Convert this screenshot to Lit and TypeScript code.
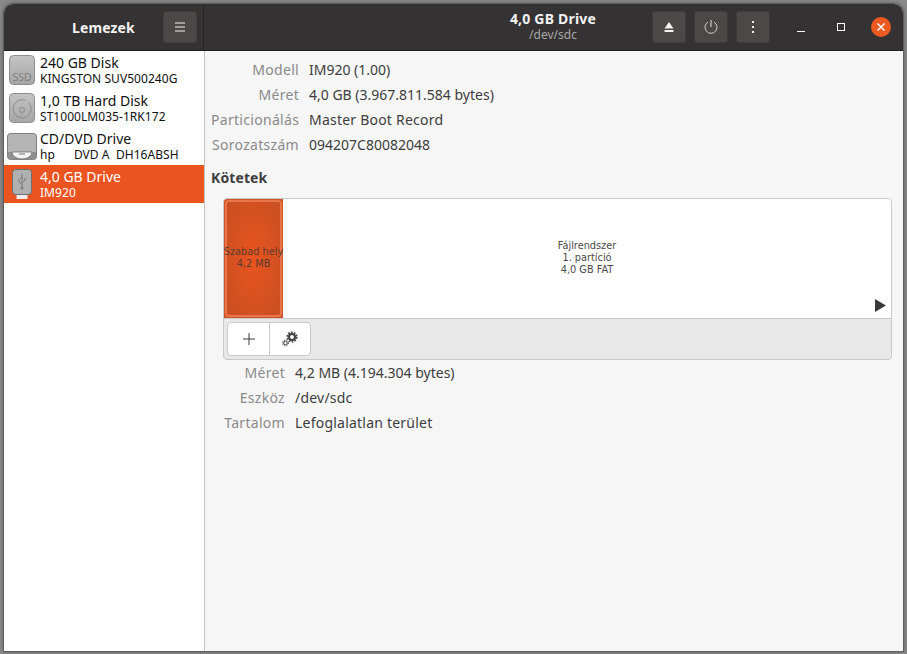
import { LitElement, html, css, svg } from "lit";
import { customElement } from "lit/decorators.js";

const driveBody = svg`<defs><linearGradient id="g" x1="0" y1="0" x2="0" y2="1"><stop offset="0" stop-color="#c4c4c4"/><stop offset="1" stop-color="#a6a6a6"/></linearGradient></defs>`;

@customElement("app-root")
export class AppRoot extends LitElement {
  static styles = css`
    :host {
      display: block;
      width: 907px;
      height: 654px;
      overflow: hidden;
      font-family: "Noto Sans", "Open Sans", sans-serif;
      font-size: 14px;
      color: #3d3d3d;
      background: #8a8a8a;
      padding: 4px 4px 3px 4px;
      box-sizing: border-box;
    }
    .win {
      height: 100%;
      display: flex;
      flex-direction: column;
      border-radius: 9px 9px 0 0;
      overflow: hidden;
      background: #f6f6f6;
      box-shadow: 0 0 0 1px #5e5e5e, 0 0 5px rgba(0, 0, 0, 0.45);
    }
    .hdr {
      height: 47px;
      flex: none;
      display: flex;
      background: #343232;
      color: #fff;
      border-bottom: 1px solid #1f1f1f;
      box-sizing: border-box;
    }
    .hl {
      width: 200px;
      flex: none;
      box-sizing: border-box;
      border-right: 1px solid #242424;
      display: flex;
      align-items: center;
      padding-left: 68px;
      gap: 15px;
    }
    .app {
      width: 76px;
      font-weight: 700;
      font-size: 14px;
      letter-spacing: 0.1px;
      color: #f2f2f2;
    }
    .btn {
      width: 34px;
      height: 32px;
      border-radius: 4px;
      background: #4a4947;
      display: flex;
      align-items: center;
      justify-content: center;
      flex: none;
      box-shadow: inset 0 0 0 1px #3f3e3c;
    }
    .hr {
      flex: 1;
      display: flex;
      align-items: center;
    }
    .title {
      flex: none;
      width: 446px;
      padding-left: 252px;
      box-sizing: border-box;
      text-align: center;
      line-height: 16px;
    }
    .t1 {
      font-weight: 700;
      font-size: 14px;
      letter-spacing: 0.2px;
      color: #f2f2f2;
    }
    .t2 {
      font-size: 12px;
      color: #a9a8a6;
    }
    .btns {
      display: flex;
      gap: 8px;
      margin-left: 2px;
    }
    .wc {
      display: flex;
      align-items: center;
      margin-left: 11px;
    }
    .wcb {
      width: 40px;
      height: 32px;
      display: flex;
      align-items: center;
      justify-content: center;
    }
    .close {
      width: 20px;
      height: 20px;
      border-radius: 50%;
      background: #ec5a22;
      display: flex;
      align-items: center;
      justify-content: center;
    }
    .main {
      flex: 1;
      display: flex;
      min-height: 0;
    }
    .side {
      width: 201px;
      flex: none;
      box-sizing: border-box;
      background: #fff;
      border-right: 1px solid #c4c4c4;
      color: #111;
    }
    .row {
      height: 38px;
      display: flex;
      align-items: center;
      box-sizing: border-box;
    }
    .row.sel {
      background: #e95420;
      color: #fff;
    }
    .ico {
      width: 36px;
      height: 38px;
      flex: none;
      display: block;
    }
    .names {
      white-space: pre;
    }
    .n1 {
      font-size: 14px;
      line-height: 15px;
    }
    .n2 {
      font-size: 12px;
      line-height: 14px;
      margin-top: 2px;
      letter-spacing: 0.05px;
    }
    .content {
      flex: 1;
      min-width: 0;
      box-sizing: border-box;
      padding: 6px 11px 0 6px;
    }
    .kv {
      display: grid;
      grid-template-columns: 88px auto;
      column-gap: 10px;
      justify-content: start;
      grid-auto-rows: 25px;
      align-items: center;
      font-size: 14px;
    }
    .kv.b {
      grid-template-columns: 62px auto;
      margin-left: 12px;
    }
    .k {
      color: #8a8a8a;
      text-align: right;
      white-space: nowrap;
      letter-spacing: 0.3px;
    }
    .v {
      white-space: nowrap;
      color: #3d3d3d;
    }
    .v.wide {
      letter-spacing: 0.22px;
    }
    .sec {
      font-weight: 700;
      font-size: 14px;
      letter-spacing: 0.1px;
      margin: 11px 0 10px 0;
      line-height: 20px;
      color: #3d3d3d;
    }
    .vol {
      margin-left: 12px;
      height: 162px;
      box-sizing: border-box;
      border: 1px solid #c9c9c9;
      border-radius: 4px;
      overflow: hidden;
      background: #e8e8e8;
      display: flex;
      flex-direction: column;
    }
    .map {
      height: 120px;
      flex: none;
      display: flex;
      background: #fff;
      border-bottom: 1px solid #c9c9c9;
      box-sizing: border-box;
      font-family: "DejaVu Sans", sans-serif;
      font-size: 9.75px;
      line-height: 12px;
      text-align: center;
      color: #4a4a4a;
      position: relative;
    }
    .free {
      width: 59px;
      flex: none;
      box-sizing: border-box;
      background: #cf5327;
      padding: 1px;
      display: flex;
    }
    .freein {
      flex: 1;
      min-width: 0;
      box-sizing: border-box;
      background: radial-gradient(ellipse at center, #e9541f 0%, #c84f22 100%);
      border: 2px solid #e9764a;
      border-radius: 4px;
      display: flex;
      align-items: center;
      justify-content: center;
      white-space: nowrap;
      color: #5e3d2e;
      padding-bottom: 2px;
    }
    .fs {
      flex: 1;
      display: flex;
      align-items: center;
      justify-content: center;
      padding-bottom: 2px;
    }
    .arrow {
      position: absolute;
      right: 5px;
      bottom: 6px;
      display: block;
    }
    .tools {
      flex: 1;
      display: flex;
      align-items: center;
      padding-left: 3px;
    }
    .tg {
      display: flex;
      height: 34px;
      border: 1px solid #c9c9c9;
      border-radius: 4px;
      background: #fff;
      box-sizing: border-box;
      overflow: hidden;
    }
    .tb {
      width: 41px;
      display: flex;
      align-items: center;
      justify-content: center;
    }
    .tb + .tb {
      width: 40px;
      border-left: 1px solid #c9c9c9;
    }
  `;

  hddBox(extra: unknown) {
    return svg`<svg class="ico" viewBox="0 0 36 38" width="36" height="38">
      ${driveBody}
      <rect x="5.5" y="4.5" width="25" height="29" rx="4" fill="url(#g)" stroke="#8d8d8d"/>
      ${extra}
    </svg>`;
  }

  render() {
    return html`<div class="win">
      <div class="hdr">
        <div class="hl">
          <div class="app">Lemezek</div>
          <div class="btn">
            <svg width="12" height="10" viewBox="0 0 12 10"><path d="M1 1h10M1 5h10M1 9h10" stroke="#f2f2f2" stroke-width="1"/></svg>
          </div>
        </div>
        <div class="hr">
          <div class="title">
            <div class="t1">4,0 GB Drive</div>
            <div class="t2">/dev/sdc</div>
          </div>
          <div class="btns">
            <div class="btn">
              <svg width="12" height="12" viewBox="0 0 12 12"><path d="M6 1l4.5 6.500h-9zM1.500 9h9v2h-9z" fill="#f4f4f4"/></svg>
            </div>
            <div class="btn">
              <svg width="14" height="14" viewBox="0 0 14 14" fill="none"><path d="M4 2.100a6 6 0 1 0 6 0" stroke="#cfcfcf" stroke-width="1"/><path d="M7 0v7" stroke="#e6e6e6" stroke-width="1"/></svg>
            </div>
            <div class="btn">
              <svg width="4" height="12" viewBox="0 0 4 12"><path d="M1 0h2v2H1zM1 5h2v2H1zM1 10h2v2H1z" fill="#eee"/></svg>
            </div>
          </div>
          <div class="wc">
            <div class="wcb"><svg width="10" height="10" viewBox="0 0 10 10"><path d="M1 9.500h8" stroke="#fff"/></svg></div>
            <div class="wcb"><svg width="10" height="10" viewBox="0 0 10 10"><rect x="1.500" y="1.500" width="7" height="7" fill="none" stroke="#fff"/></svg></div>
            <div class="wcb"><div class="close"><svg width="10" height="10" viewBox="0 0 10 10"><path d="M1.500 1.500l7 7M8.500 1.500l-7 7" stroke="#fff" stroke-width="1.500"/></svg></div></div>
          </div>
        </div>
      </div>
      <div class="main">
        <div class="side">
          <div class="row">
            ${this.hddBox(svg`<text x="18" y="30" font-size="10.500" text-anchor="middle" fill="#808080" font-family="Noto Sans">SSD</text>`)}
            <div class="names"><div class="n1">240 GB Disk</div><div class="n2">KINGSTON SUV500240G</div></div>
          </div>
          <div class="row">
            ${this.hddBox(svg`<path d="M24.500 13.500a9 9 0 1 1-3-2" fill="none" stroke="#8b8b8b"/><circle cx="18" cy="21" r="2.500" fill="none" stroke="#8b8b8b"/>`)}
            <div class="names"><div class="n1">1,0 TB Hard Disk</div><div class="n2">ST1000LM035-1RK172</div></div>
          </div>
          <div class="row">
            <svg class="ico" viewBox="0 0 36 38" width="36" height="38">
              <path d="M6.500 6.500h23a3 3 0 0 1 3 3v20a3 3 0 0 1-3 3h-23a3 3 0 0 1-3-3v-20a3 3 0 0 1 3-3z" fill="#b5b5b5" stroke="#7f7f7f"/>
              <path d="M4 25h28v4.500a3 3 0 0 1-3 3H7a3 3 0 0 1-3-3z" fill="#8f8f8f"/>
              <path d="M8 25a10 7 0 0 0 20 0z" fill="#f2f2f2" stroke="#666" stroke-width="0.700"/>
              <path d="M15 27h6" stroke="#777"/>
            </svg>
            <div class="names"><div class="n1">CD/DVD Drive</div><div class="n2">hp      DVD A  DH16ABSH</div></div>
          </div>
          <div class="row sel">
            <svg class="ico" viewBox="0 0 36 38" width="36" height="38">
              <rect x="12.500" y="29" width="11" height="5" fill="#eee"/>
              <rect x="8.500" y="4.500" width="19" height="25" rx="3" fill="#b0b0b0" stroke="#6f6f6f"/>
              <path d="M18 9v13M18 12l-2 2M18 20l-3-3v-2.500M18 18l3-3v-2" stroke="#7a7a7a" fill="none"/>
              <circle cx="18" cy="23" r="1.500" fill="#7a7a7a"/>
            </svg>
            <div class="names"><div class="n1">4,0 GB Drive</div><div class="n2">IM920</div></div>
          </div>
        </div>
        <div class="content">
          <div class="kv">
            <div class="k">Modell</div><div class="v">IM920 (1.00)</div>
            <div class="k">Méret</div><div class="v">4,0 GB (3.967.811.584 bytes)</div>
            <div class="k">Particionálás</div><div class="v wide">Master Boot Record</div>
            <div class="k">Sorozatszám</div><div class="v">094207C80082048</div>
          </div>
          <div class="sec">Kötetek</div>
          <div class="vol">
            <div class="map">
              <div class="free"><div class="freein"><div>Szabad hely<br />4,2 MB</div></div></div>
              <div class="fs"><div>Fájlrendszer<br />1. partíció<br />4,0 GB FAT</div></div>
              <svg class="arrow" width="11" height="13" viewBox="0 0 11 13"><path d="M0 0l11 6.500-11 6.500z" fill="#3a3a3a"/></svg>
            </div>
            <div class="tools">
              <div class="tg">
                <div class="tb"><svg width="12" height="12" viewBox="0 0 12 12"><path d="M6 0v12M0 6h12" stroke="#3d3d3d"/></svg></div>
                <div class="tb"><svg width="16" height="16" viewBox="0 0 16 16">
                  <g fill="none" stroke="#3d3d3d">
                    <circle cx="10" cy="6" r="3" stroke-width="2"/>
                    <circle cx="10" cy="6" r="4.800" stroke-width="1.500" stroke-dasharray="1.700 1.300"/>
                    <circle cx="3.500" cy="12" r="1.800" stroke-width="1"/>
                    <circle cx="3.500" cy="12" r="3" stroke-width="1" stroke-dasharray="1.200 1.200"/>
                  </g></svg></div>
              </div>
            </div>
          </div>
          <div class="kv b">
            <div class="k">Méret</div><div class="v">4,2 MB (4.194.304 bytes)</div>
            <div class="k">Eszköz</div><div class="v wide">/dev/sdc</div>
            <div class="k">Tartalom</div><div class="v wide">Lefoglalatlan terület</div>
          </div>
        </div>
      </div>
    </div>`;
  }
}
